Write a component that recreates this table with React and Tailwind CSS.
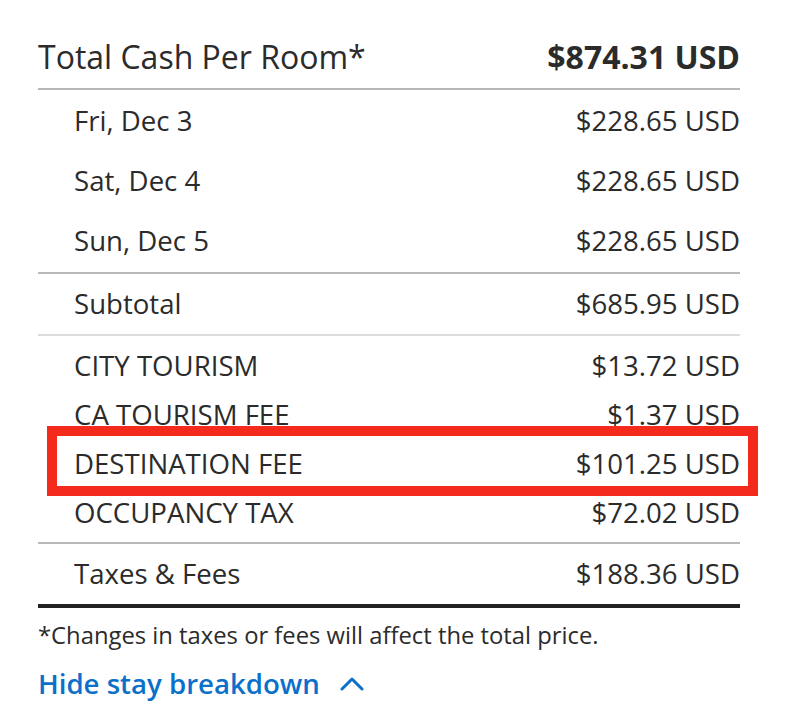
const NIGHTS = [
  ["Fri, Dec 3", "$228.65 USD"],
  ["Sat, Dec 4", "$228.65 USD"],
  ["Sun, Dec 5", "$228.65 USD"],
];

const FEES = [
  ["CITY TOURISM", "$13.72 USD"],
  ["CA TOURISM FEE", "$1.37 USD"],
  ["DESTINATION FEE", "$101.25 USD", true],
  ["OCCUPANCY TAX", "$72.02 USD"],
];

function Row({ label, amount, height, marked }) {
  return (
    <div className={`relative flex items-center justify-between pb-[2px] pl-[36px] ${height}`}>
      <span>{label}</span>
      <span>{amount}</span>
      {marked && (
        <div className="absolute left-[9px] right-[-18px] top-[-13px] bottom-[-8px] border-[10px] border-[#f42a1c]" />
      )}
    </div>
  );
}

export default function App() {
  return (
    <div className="min-h-screen bg-white font-['Open_Sans',sans-serif] text-[#2b2b2b]">
      <div className="ml-[38px] w-[702px]">
        <div className="flex h-[88px] items-center justify-between pt-[26px] text-[32px] leading-[40px]">
          <span>Total Cash Per Room*</span>
          <span className="font-bold">$874.31 USD</span>
        </div>
        <div className="h-[2px] bg-[#b7b7b7]" />

        <div className="py-px text-[27.6px] leading-[36px]">
          {NIGHTS.map(([label, amount]) => (
            <Row key={label} label={label} amount={amount} height="h-[60px]" />
          ))}
        </div>
        <div className="h-[2px] bg-[#b9b9b9]" />

        <div className="text-[27.6px] leading-[36px]">
          <Row label="Subtotal" amount="$685.95 USD" height="h-[60px]" />
        </div>
        <div className="h-[2px] bg-[#dddddd]" />

        <div className="py-[5px] text-[27.6px] leading-[36px]">
          {FEES.map(([label, amount, marked]) => (
            <Row key={label} label={label} amount={amount} height="h-[49px]" marked={marked} />
          ))}
        </div>
        <div className="h-[2px] bg-[#b9b9b9]" />

        <div className="text-[27.6px] leading-[36px]">
          <Row label="Taxes & Fees" amount="$188.36 USD" height="h-[60px]" />
        </div>
        <div className="h-[4px] bg-[#222222]" />

        <p className="mt-[11px] text-[23.8px] leading-[32px]">
          *Changes in taxes or fees will affect the total price.
        </p>

        <button className="mt-[14px] flex items-center gap-[20px] text-[27.6px] font-semibold leading-[36px] text-[#0b70c9]">
          Hide stay breakdown
          <svg width="24" height="15" viewBox="0 0 24 15" fill="none">
            <path d="M2 13 L12 3 L22 13" stroke="currentColor" strokeWidth="3" strokeLinecap="round" strokeLinejoin="round" />
          </svg>
        </button>
      </div>
    </div>
  );
}
